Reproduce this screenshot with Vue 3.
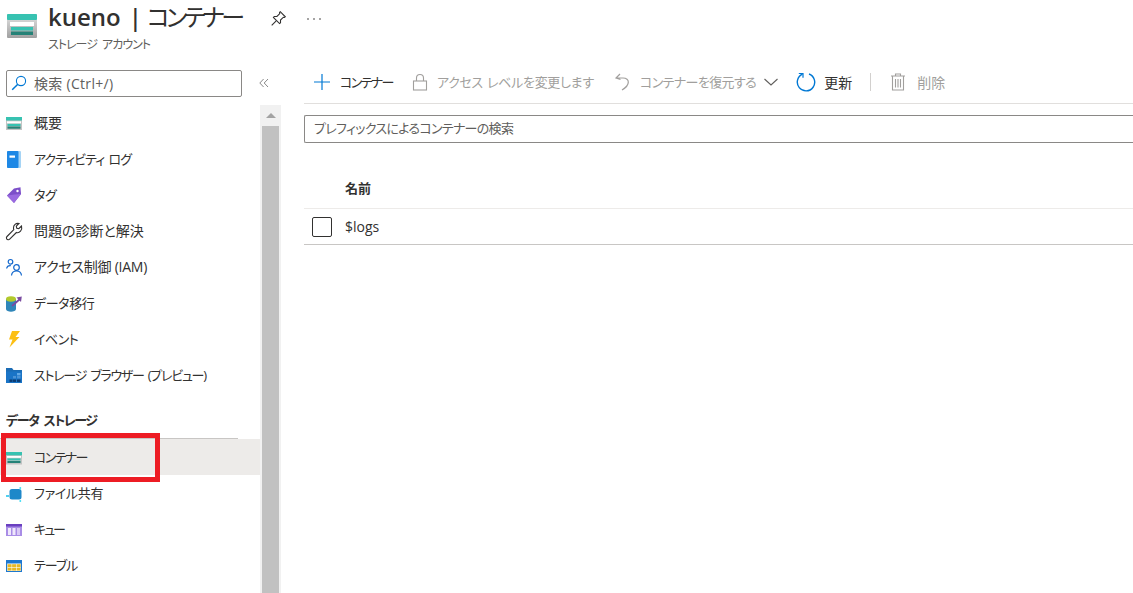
<script setup>
const topItems = [
  { label: '概要', icon: 'storage', fit: 'k14' },
  { label: 'アクティビティ ログ', icon: 'book', fit: 'a' },
  { label: 'タグ', icon: 'tag', fit: 'b' },
  { label: '問題の診断と解決', icon: 'wrench', fit: 'k14' },
  { label: 'アクセス制御 (IAM)', icon: 'iam', fit: 'c' },
  { label: 'データ移行', icon: 'migrate', fit: 'd' },
  { label: 'イベント', icon: 'bolt', fit: 'b' },
  { label: 'ストレージ ブラウザー (プレビュー)', icon: 'browser', fit: 'e' },
]
const dataItems = [
  { label: 'コンテナー', icon: 'storage', active: true, fit: 'f' },
  { label: 'ファイル共有', icon: 'share', fit: 'g' },
  { label: 'キュー', icon: 'queue', fit: 'h' },
  { label: 'テーブル', icon: 'table', fit: 'i' },
]
</script>

<template>
  <div class="page">
    <header class="head">
      <svg class="logo" viewBox="0 0 30 24" width="30" height="24">
        <defs>
          <linearGradient id="lg" x1="0" y1="0" x2="0" y2="1">
            <stop offset="0" stop-color="#e4e4e4" />
            <stop offset="1" stop-color="#a0a0a0" />
          </linearGradient>
        </defs>
        <rect x="0" y="0" width="30" height="24" rx="1" fill="url(#lg)" />
        <rect x="0" y="0" width="30" height="6" rx="1" fill="#37c2b1" />
        <rect x="3" y="8" width="24" height="4" fill="#fff" />
        <rect x="4" y="13" width="22" height="3.5" fill="#37c2b1" />
        <rect x="4" y="17.5" width="22" height="3.5" fill="#258277" />
      </svg>
      <div class="titles">
        <div class="title"><span class="t-name">kueno</span><span class="t-bar">|</span><span class="t-page">コンテナー</span></div>
        <div class="sub">ストレージ アカウント</div>
      </div>
      <svg class="pin" viewBox="0 0 16 16" width="17" height="17" fill="none" stroke="#323130" stroke-width="1">
        <path d="M9.6 1.6 14.4 6.4 13.6 7 12.6 6.8 9.9 9.5 9.9 12 9 12.8 3.2 7 4 6.1 6.5 6.1 9.2 3.4 9 2.3Z" />
        <path d="M5.8 10.2 1.6 14.4" />
      </svg>
      <svg class="more" viewBox="0 0 14 2" width="14" height="2" fill="#323130">
        <circle cx="1" cy="1" r="0.8" /><circle cx="7" cy="1" r="0.8" /><circle cx="13" cy="1" r="0.8" />
      </svg>
    </header>

    <div class="body">
      <aside class="side">
        <div class="side-top">
          <div class="side-search">
            <svg viewBox="0 0 16 16" width="16" height="16" fill="none" stroke="#0078d4" stroke-width="1.1">
              <circle cx="10" cy="6" r="4.6" />
              <path d="M6.8 9.2 1.2 14.8" stroke-width="1.5" />
            </svg>
            <span>検索 (Ctrl+/)</span>
          </div>
          <svg class="collapse" viewBox="0 0 10 10" width="10" height="10" fill="none" stroke="#7a7a7a" stroke-width="0.9">
            <path d="M4.6 1 .8 5 4.6 9M9 1 5.2 5 9 9" />
          </svg>
        </div>
        <div class="side-main">
          <nav class="menu">
            <div v-for="item in topItems" :key="item.label" class="row">
              <span class="ico">
                <svg viewBox="0 -1 16 18" width="16" height="18">
                  <g v-if="item.icon === 'storage'">
                    <rect x="0" y="2" width="16" height="13" fill="#c4c4c4" />
                    <rect x="0" y="2" width="16" height="3.5" fill="#37c2b1" />
                    <rect x="1" y="6.3" width="14" height="2" fill="#fff" />
                    <rect x="1.5" y="8.9" width="13" height="2.2" fill="#37c2b1" />
                    <rect x="1.5" y="11.5" width="13" height="2.2" fill="#258277" />
                  </g>
                  <g v-else-if="item.icon === 'book'">
                    <rect x="1" y="0" width="14" height="17" rx="1" fill="#a6d4f5" />
                    <rect x="1" y="0" width="11.5" height="17" rx="1" fill="#1e88e5" />
                    <rect x="3.5" y="4.5" width="5.5" height="2.2" fill="#fff" />
                  </g>
                  <g v-else-if="item.icon === 'tag'">
                    <path d="M1 8.5 8 1.5 14.5 .3 15 7 8 16Z" fill="#7c4fc9" />
                    <path d="M1 8.5 8 16 15 7 8.5 7.5Z" fill="#9a6ae0" />
                    <circle cx="11.5" cy="4" r="1.2" fill="#fff" />
                  </g>
                  <g v-else-if="item.icon === 'wrench'" fill="none" stroke="#323130" stroke-width="1.1">
                    <path d="M15.5 3 12.8 5.7 10.8 5.2 10.3 3.2 13 .5C10 -.3 7.3 2 7.5 5c0 .7.1 1.2.3 1.7L1 13.5c-1.3 1.3-.3 3.5 1.5 3.3.5 0 .9-.3 1.2-.6L10.4 9.5c3 1 6.3-2.5 5.1-6.5Z" />
                  </g>
                  <g v-else-if="item.icon === 'iam'" fill="none" stroke="#1267cc" stroke-width="1.2">
                    <circle cx="4.5" cy="2.8" r="2.3" />
                    <path d="M0.6 9.5C1 7.4 2.6 6.4 4.8 6.6" />
                    <circle cx="10.5" cy="8.5" r="2.8" />
                    <path d="M5.5 16.5C5.8 13.5 8 12 10.5 12S15.2 13.5 15.5 16.5" />
                  </g>
                  <g v-else-if="item.icon === 'migrate'">
                    <path d="M0 4 V14 C0 17.5 10 17.5 10 14 V4Z" fill="#2f86b9" />
                    <ellipse cx="5" cy="4" rx="5" ry="2.8" fill="#b2c92c" />
                    <path d="M6 11 14 4" stroke="#7a4ba0" stroke-width="1.8" />
                    <path d="M10.5 2.5 15.8 1.5 15 7Z" fill="#7a4ba0" />
                  </g>
                  <g v-else-if="item.icon === 'bolt'">
                    <path d="M6 0H14L9.5 6H13.5L3.5 16.5 6.5 8.5H3Z" fill="#fcbf14" />
                  </g>
                  <g v-else-if="item.icon === 'browser'">
                    <path d="M0 1H6L7.5 3H16V16H0Z" fill="#1b6cb5" />
                    <rect x="0" y="4.5" width="16" height="11.5" fill="#1a74c6" />
                    <rect x="11" y="6" width="3.5" height="2.4" fill="#62a9e6" />
                    <rect x="7" y="9" width="3" height="2.4" fill="#4b93d6" />
                    <rect x="11" y="9" width="3.5" height="2.4" fill="#4b93d6" />
                    <rect x="3.5" y="12.5" width="3" height="2.4" fill="#0a3a70" />
                    <rect x="7" y="12.5" width="3" height="2.4" fill="#0a3a70" />
                    <rect x="11" y="12.5" width="3.5" height="2.4" fill="#0a3a70" />
                  </g>
                </svg>
              </span>
              <span class="lab" :class="item.fit">{{ item.label }}</span>
            </div>

            <div class="section">データ ストレージ</div>
            <div class="section-rule"></div>

            <div v-for="item in dataItems" :key="item.label" class="row" :class="{ active: item.active }">
              <span class="ico">
                <svg viewBox="0 -1 16 18" width="16" height="18">
                  <g v-if="item.icon === 'storage'">
                    <rect x="0" y="3" width="16" height="12.5" fill="#c4c4c4" />
                    <rect x="0" y="3" width="16" height="3.3" fill="#37c2b1" />
                    <rect x="1" y="7" width="14" height="1.8" fill="#fff" />
                    <rect x="1.5" y="9.4" width="13" height="2" fill="#37c2b1" />
                    <rect x="1.5" y="12" width="13" height="2" fill="#258277" />
                  </g>
                  <g v-else-if="item.icon === 'share'">
                    <rect x="3.5" y="4" width="12" height="10.5" rx="2.5" fill="#1e88c9" />
                    <rect x="0" y="10" width="3" height="2" fill="#50d0f0" />
                    <rect x="13.5" y="2" width="1.6" height="2.5" fill="#50e0f5" />
                    <rect x="13.5" y="15" width="1.6" height="2" fill="#50e0f5" />
                  </g>
                  <g v-else-if="item.icon === 'queue'">
                    <rect x="0" y="3" width="16" height="12" fill="#a98de6" />
                    <rect x="0" y="3" width="16" height="2.5" fill="#6a3fc0" />
                    <rect x="2" y="7" width="3" height="7" fill="#efe8fb" />
                    <rect x="6.5" y="7" width="3" height="7" fill="#efe8fb" />
                    <rect x="11" y="7" width="3" height="7" fill="#d9c9f5" />
                  </g>
                  <g v-else-if="item.icon === 'table'">
                    <rect x="0" y="3" width="16" height="12" fill="#fff" />
                    <rect x="0" y="3" width="16" height="3.5" fill="#1e78d0" />
                    <rect x="0" y="6" width="1.2" height="9" fill="#1e78d0" />
                    <rect x="14.8" y="6" width="1.2" height="9" fill="#1e78d0" />
                    <rect x="0" y="14" width="16" height="1" fill="#1e78d0" />
                    <rect x="1.6" y="7.2" width="4" height="2.8" fill="#e9b824" />
                    <rect x="6.1" y="7.2" width="4" height="2.8" fill="#e9b824" />
                    <rect x="10.6" y="7.2" width="4" height="2.8" fill="#e9b824" />
                    <rect x="1.6" y="10.6" width="4" height="3" fill="#e9b824" />
                    <rect x="6.1" y="10.6" width="4" height="3" fill="#e9b824" />
                    <rect x="10.6" y="10.6" width="4" height="3" fill="#e9b824" />
                  </g>
                </svg>
              </span>
              <span class="lab" :class="item.fit">{{ item.label }}</span>
            </div>
          </nav>
          <div class="scrollbar">
            <div class="sb-btn"><span class="sb-arrow"></span></div>
            <div class="sb-thumb"></div>
          </div>
          <div class="callout"></div>
        </div>
      </aside>

      <main class="main">
        <div class="toolbar">
          <div class="tool add">
            <svg viewBox="0 0 18 18" width="18" height="18" stroke="#0078d4" stroke-width="1.2" fill="none"><path d="M9 1V17M1 9H17" /></svg>
            <span class="t-on f">コンテナー</span>
          </div>
          <div class="tool lock">
            <svg viewBox="0 0 16 18" width="16" height="18" fill="none" stroke="#a19f9d" stroke-width="1.1"><rect x="1.5" y="8" width="13" height="9" /><path d="M4.5 8V5a3.5 3.5 0 0 1 7 0V8" /></svg>
            <span class="t-off w1">アクセス レベルを変更します</span>
          </div>
          <div class="tool restore">
            <svg viewBox="0 0 16 18" width="16" height="18" fill="none" stroke="#a19f9d" stroke-width="1.2"><path d="M6 1 2 5 6.5 6.5M2 5H9C16 5 16.5 12 8 17" /></svg>
            <span class="t-off w2">コンテナーを復元する</span>
            <svg class="chev" viewBox="0 0 14 8" width="14" height="8" fill="none" stroke="#605e5c" stroke-width="1.1"><path d="M.5 1 7 7 13.5 1" /></svg>
          </div>
          <div class="tool refresh">
            <svg viewBox="0 0 20 20" width="20" height="20" fill="none" stroke="#0078d4" stroke-width="1.4"><path d="M6.5 2.2A8.7 8.7 0 1 0 13 2" /><path d="M2.8 1.5H7V5.8" stroke-width="1.2" /></svg>
            <span class="t-on k14">更新</span>
          </div>
          <div class="tool-sep"></div>
          <div class="tool trash">
            <svg viewBox="0 0 14 18" width="14" height="18" fill="none" stroke="#a19f9d" stroke-width="1.1"><path d="M0 3H14M4.5 3V1H9.5V3M1.5 3V17H12.5V3M4.5 6V14.5M7 6V14.5M9.5 6V14.5" /></svg>
            <span class="t-off k14">削除</span>
          </div>
        </div>
        <div class="filter">プレフィックスによるコンテナーの検索</div>
        <div class="th">名前</div>
        <div class="tr">
          <span class="check"></span>
          <span class="cell">$logs</span>
        </div>
      </main>
    </div>
  </div>
</template>

<style>
html, body { margin: 0; background: #fff; overflow: hidden; }
</style>

<style scoped>
.page {
  width: 1133px;
  height: 593px;
  overflow: hidden;
  background: #fff;
  color: #323130;
  font-family: "Open Sans", "Noto Sans CJK JP", sans-serif;
  font-size: 13px;
  font-feature-settings: "palt";
}
.head { display: flex; height: 61px; box-sizing: border-box; padding: 0 0 0 7px; }
.logo { margin-top: 14px; flex: none; }
.titles { margin-left: 11px; width: 211px; }
.title { font-size: 24px; line-height: 34px; height: 34px; color: #323130; white-space: nowrap; }
.t-name { font-weight: 600; }
.t-bar { margin: 0 5px 0 8px; font-weight: 600; }
.t-page { letter-spacing: -3.6px; }
.sub { font-size: 12px; line-height: 18px; margin-top: 2px; color: #605e5c; white-space: nowrap; letter-spacing: -1px; word-spacing: 3px; }
.pin { margin-top: 10px; margin-left: 11px; }
.more { margin-left: 20px; margin-top: 18px; }

.body { display: flex; height: 532px; }
.side { width: 281px; flex: none; }
.side-top { display: flex; align-items: center; height: 44px; padding-left: 6px; box-sizing: border-box; }
.side-search {
  width: 236px; height: 27px; box-sizing: border-box;
  border: 1px solid #8a8886; border-radius: 2px;
  display: flex; align-items: center; gap: 7px; padding-left: 4px;
  color: #605e5c; font-size: 14px; letter-spacing: 0.3px;
}
.collapse { margin-left: 17px; }
.side-main { display: flex; position: relative; height: 488px; }
.menu { width: 260px; flex: none; }
.row { display: flex; align-items: center; height: 36px; padding-left: 6px; box-sizing: border-box; }
.row.active { background: #edebe9; }
.ico { width: 16px; height: 18px; flex: none; display: block; }
.ico svg { display: block; overflow: visible; }
.lab { margin-left: 12px; white-space: nowrap; padding-bottom: 2px; }
.k14 { font-size: 14px; }
.a { letter-spacing: -1px; word-spacing: 2px; }
.b { letter-spacing: -0.5px; }
.c { font-size: 14px; letter-spacing: -0.25px; }
.d { letter-spacing: -0.4px; }
.e { letter-spacing: -1.25px; word-spacing: 2px; }
.f { letter-spacing: -1.6px; }
.g { letter-spacing: -0.3px; }
.h { letter-spacing: -2px; }
.i { letter-spacing: -1px; }
.w1 { letter-spacing: -0.3px; word-spacing: 1px; }
.w2 { letter-spacing: -0.6px; }
.section { height: 28px; line-height: 20px; padding: 17px 0 0 6px; font-weight: 600; letter-spacing: -1.4px; word-spacing: 3px; }
.section-rule { height: 1px; width: 238px; background: #c8c6c4; }
.scrollbar { width: 21px; background: #f1f1f1; flex: none; display: flex; flex-direction: column; }
.sb-btn { height: 21px; display: flex; align-items: center; justify-content: center; }
.sb-arrow { width: 0; height: 0; border-left: 5px solid transparent; border-right: 5px solid transparent; border-bottom: 5px solid #a3a3a3; }
.sb-thumb { flex: 1; margin: 0 2px; background: #c1c1c1; }
.callout {
  position: absolute; left: 1px; top: 328px; width: 159px; height: 49px;
  box-sizing: border-box; border: 5px solid #ed1c24;
}

.main { flex: 1; padding-left: 23px; min-width: 0; }
.toolbar { display: flex; align-items: center; height: 43px; box-sizing: border-box; border-bottom: 1px solid #e1dfdd; }
.tool { display: flex; align-items: center; white-space: nowrap; }
.tool span { padding-bottom: 1px; }
.t-on { color: #323130; }
.t-off { color: #a19f9d; }
.add { margin-left: 9px; gap: 9px; }
.lock { margin-left: 19px; gap: 9px; }
.restore { margin-left: 20px; gap: 10px; }
.chev { margin-left: -2px; }
.refresh { margin-left: 18px; gap: 8px; }
.tool-sep { width: 1px; height: 18px; background: #d2d0ce; margin: 0 20px 0 18px; }
.trash { gap: 12px; }
.filter {
  margin-top: 11px; height: 28px; box-sizing: border-box;
  border: 1px solid #8a8886; border-right: none; border-radius: 2px 0 0 2px;
  padding-left: 9px; line-height: 25px; color: #605e5c; white-space: nowrap; letter-spacing: -0.7px;
}
.th { margin-top: 28px; height: 38px; line-height: 34px; box-sizing: border-box; padding-left: 41px; font-weight: 600; border-bottom: 1px solid #edebe9; }
.tr { display: flex; align-items: center; height: 36px; box-sizing: border-box; border-bottom: 1px solid #c8c6c4; padding-left: 8px; }
.check { width: 20px; height: 20px; box-sizing: border-box; border: 1px solid #323130; border-radius: 2px; }
.cell { margin-left: 13px; color: #323130; font-size: 14px; }
</style>
